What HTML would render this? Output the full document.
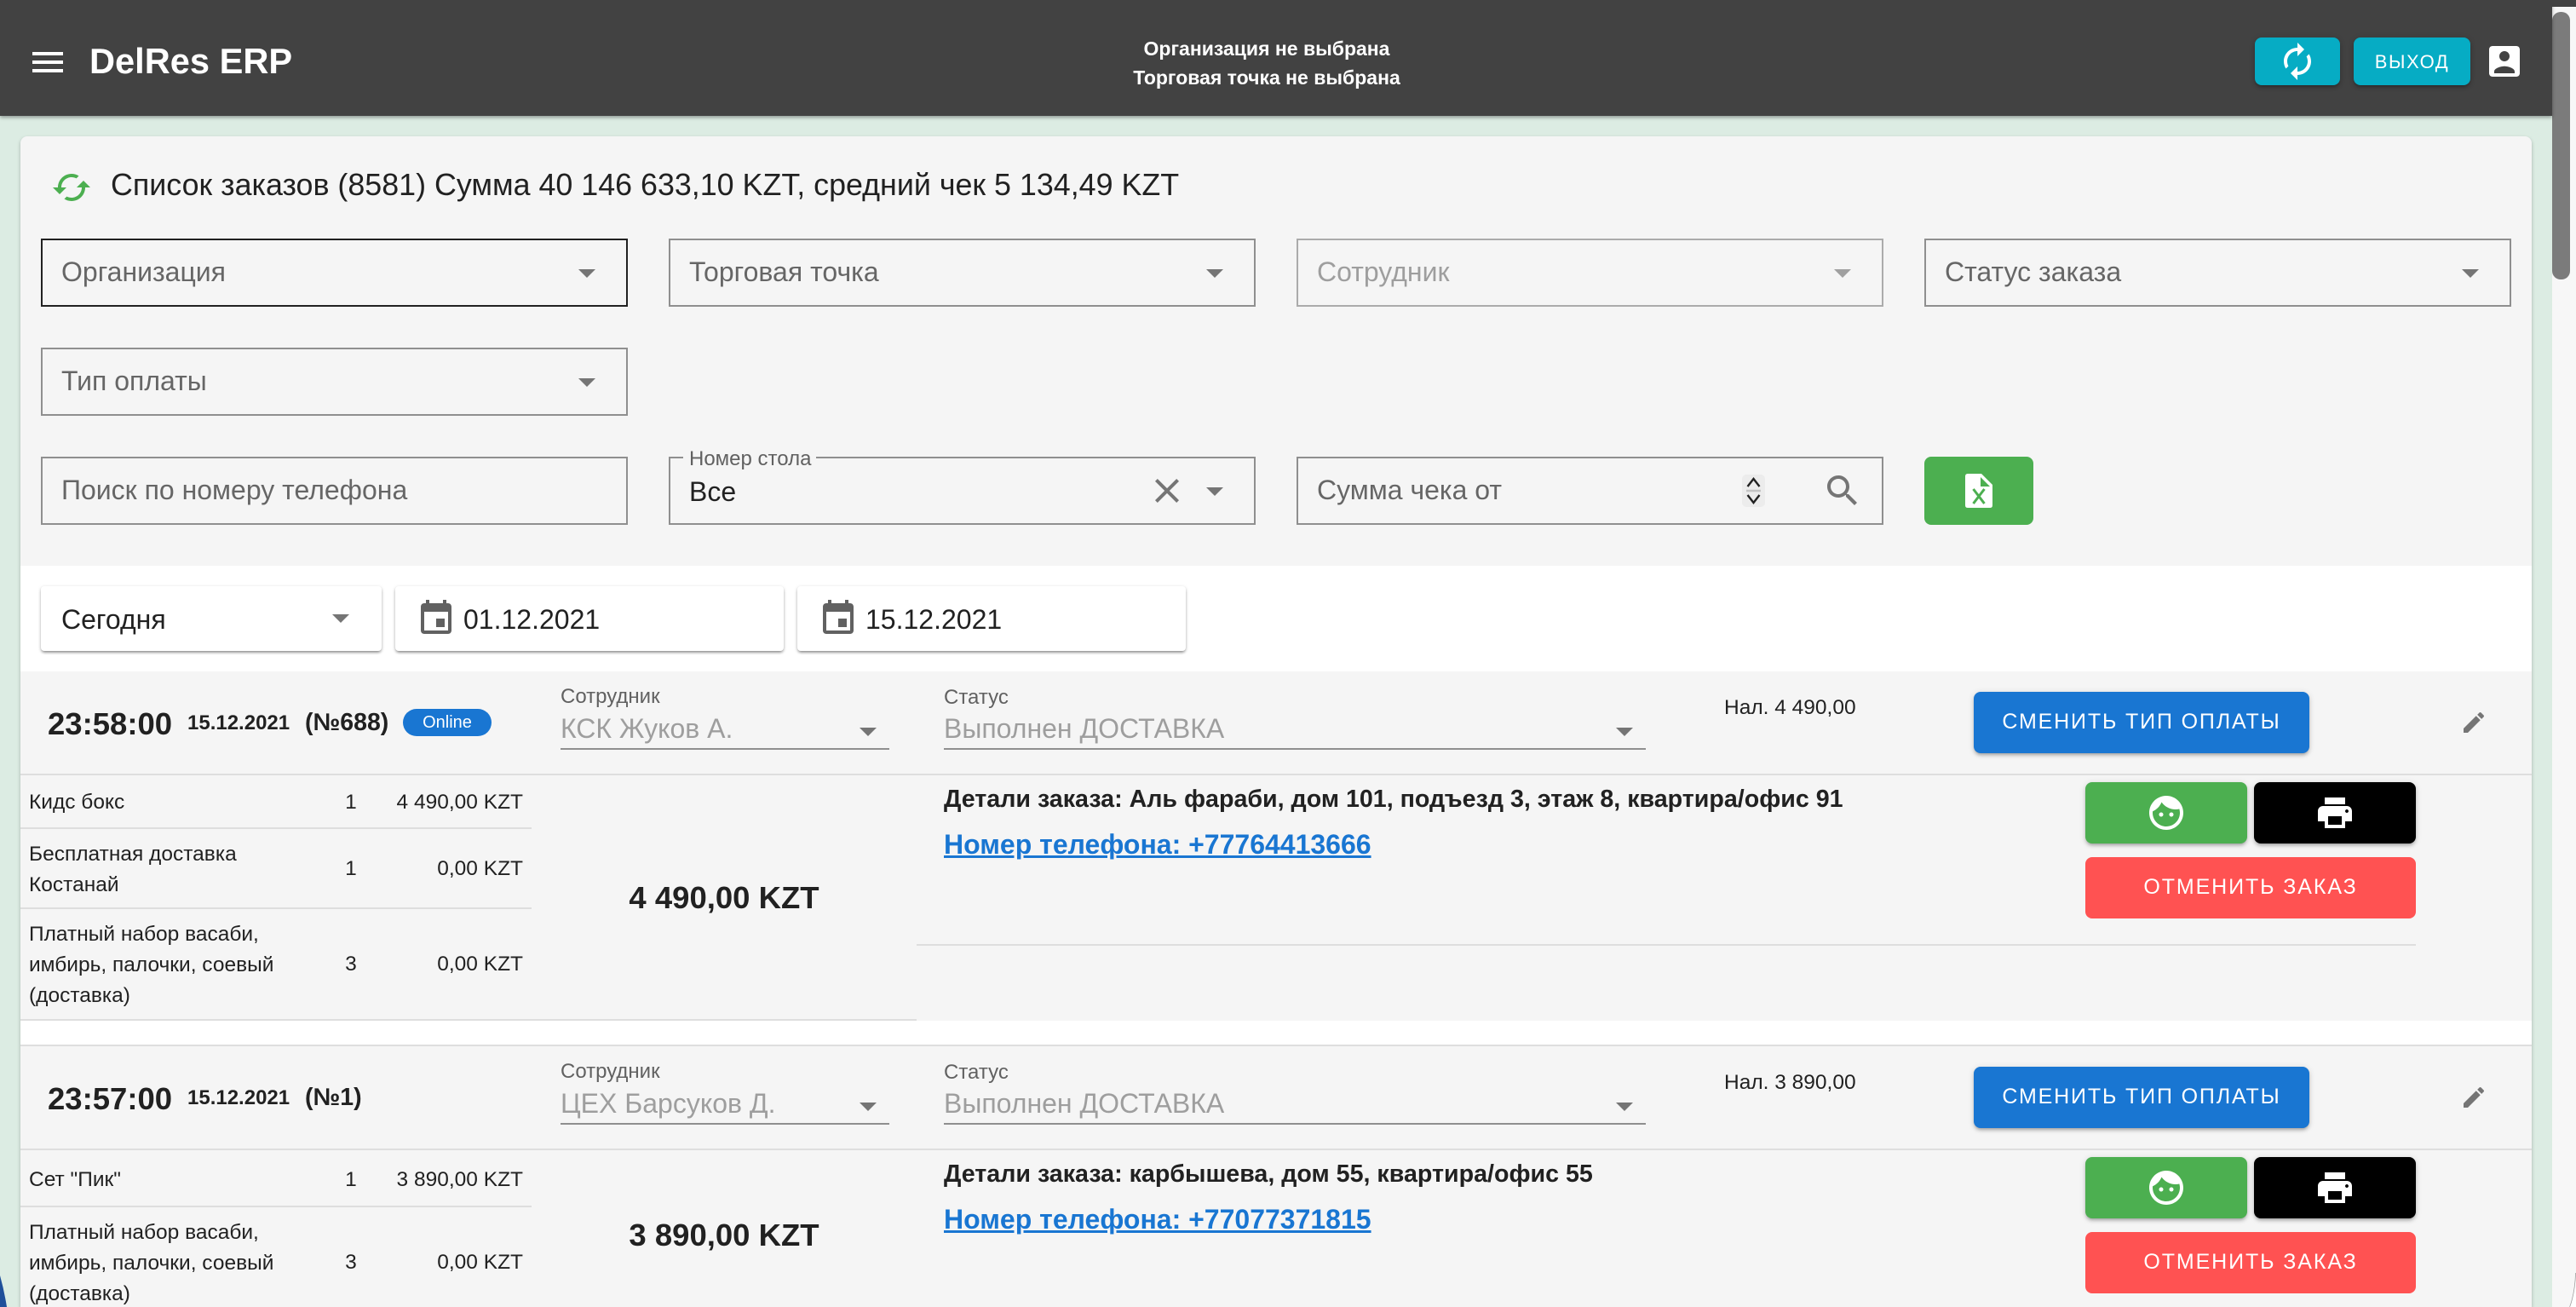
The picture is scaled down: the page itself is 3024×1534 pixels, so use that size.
<!DOCTYPE html>
<html lang="ru"><head><meta charset="utf-8"><title>DelRes ERP</title>
<style>
html,body{margin:0;padding:0;width:3024px;height:1534px;overflow:hidden;background:#dcece3}
body{position:relative;font-family:"Liberation Sans",Arial,sans-serif;color:#212121}
.a{position:absolute;white-space:nowrap}
.t{position:absolute;white-space:nowrap;line-height:40px;height:40px}
.box{position:absolute;box-sizing:border-box;width:689px;height:80px;border:2px solid #8f8f8f}
.ph{color:#666;font-size:32px}
.arr{position:absolute;width:0;height:0;border-left:10px solid transparent;border-right:10px solid transparent;border-top:10px solid #757575}
.ln{position:absolute;height:2px;background:#dedede}
.btn{position:absolute;border-radius:8px;box-shadow:0 3px 3px -2px rgba(0,0,0,.2),0 3px 4px rgba(0,0,0,.14),0 1px 8px rgba(0,0,0,.12);color:#fff;text-align:center}
.date{position:absolute;background:#fff;top:688px;height:76px;border-radius:4px;box-shadow:0 3px 3px -2px rgba(0,0,0,.3),0 2px 3px rgba(0,0,0,.2),0 1px 5px rgba(0,0,0,.12)}
svg{position:absolute;display:block}
.s24{font-size:24.5px}
.b{font-weight:bold}
.lab{font-size:24px;color:#616161}
.val{font-size:32px;color:#9e9e9e}
.ul{position:absolute;height:2px;background:#8f8f8f}
</style></head><body>

<!-- card -->
<div class="a" style="left:24px;top:160px;width:2948px;height:1374px;background:#f5f5f5;border-radius:8px 8px 0 0;box-shadow:0 2px 4px rgba(0,0,0,.25)"></div>
<div class="a" style="left:24px;top:664px;width:2948px;height:124px;background:#fff"></div>
<div class="a" style="left:1076px;top:1198px;width:1896px;height:30px;background:#fff"></div>
<div class="a" style="left:24px;top:1198px;width:1052px;height:30px;background:#fff"></div>

<!-- scrollbar -->
<div class="a" style="left:2996px;top:8px;width:28px;height:1526px;background:#f7f7f7"></div>
<div class="a" style="left:2996px;top:14px;width:21px;height:314px;background:#7b7b7b;border-radius:10px"></div>

<!-- header -->
<div class="a" style="left:0;top:0;width:2996px;height:136px;background:#424242;box-shadow:0 2px 4px rgba(0,0,0,.35)"></div>
<div class="a" style="left:2996px;top:0;width:28px;height:8px;background:#424242"></div>
<svg style="left:32px;top:49px" width="48" height="48" viewBox="0 0 24 24" fill="#fff"><path d="M3 18h18v-2H3v2zm0-5h18v-2H3v2zm0-7v2h18V6H3z"/></svg>
<div class="t b" style="left:105px;top:52px;font-size:41.6px;color:#fff">DelRes ERP</div>
<div class="t b" style="left:1287px;width:400px;top:37px;font-size:23px;color:#fff;text-align:center">Организация не выбрана</div>
<div class="t b" style="left:1287px;width:400px;top:71px;font-size:23px;color:#fff;text-align:center">Торговая точка не выбрана</div>
<div class="btn" style="left:2647px;top:44px;width:100px;height:56px;background:#06acc4"></div>
<svg style="left:2673px;top:48px;transform:scaleX(-1)" width="48" height="48" viewBox="0 0 24 24" fill="#fff"><path d="M12 4V1L8 5l4 4V6c3.31 0 6 2.69 6 6 0 1.01-.25 1.97-.7 2.8l1.46 1.46C19.54 15.03 20 13.57 20 12c0-4.42-3.58-8-8-8zm0 14c-3.31 0-6-2.69-6-6 0-1.01.25-1.97.7-2.8L5.24 7.74C4.46 8.97 4 10.43 4 12c0 4.42 3.58 8 8 8v3l4-4-4-4v3z"/></svg>
<div class="btn" style="left:2763px;top:44px;width:137px;height:56px;line-height:58px;background:#06acc4;font-size:22px;letter-spacing:1.6px">ВЫХОД</div>
<svg style="left:2916px;top:48px" width="48" height="48" viewBox="0 0 24 24" fill="#fff"><path d="M19 3H5c-1.11 0-2 .9-2 2v14c0 1.1.89 2 2 2h14c1.1 0 2-.9 2-2V5c0-1.1-.9-2-2-2zm-7 3c1.65 0 3 1.35 3 3s-1.35 3-3 3-3-1.35-3-3 1.35-3 3-3zm6 13H6v-1c0-2 4-3.1 6-3.1s6 1.1 6 3.1v1z"/></svg>

<!-- title -->
<svg style="left:60px;top:196px" width="48" height="48" viewBox="0 0 24 24" fill="#4caf50"><path d="M19 8l-4 4h3c0 3.31-2.69 6-6 6-1.01 0-1.97-.25-2.8-.7l-1.46 1.46C8.97 19.54 10.43 20 12 20c4.42 0 8-3.58 8-8h3l-4-4zM6 12c0-3.31 2.69-6 6-6 1.01 0 1.97.25 2.8.7l1.46-1.46C15.03 4.46 13.57 4 12 4c-4.42 0-8 3.58-8 8H1l4 4 4-4H6z"/></svg>
<div class="t" style="left:130px;top:197px;font-size:35.84px">Список заказов (8581) Сумма 40 146 633,10 KZT, средний чек 5 134,49 KZT</div>

<!-- filters row 1 -->
<div class="box" style="left:48px;top:280px;border-color:#212121"></div>
<div class="t ph" style="left:72px;top:299px">Организация</div><div class="arr" style="left:679px;top:316px"></div>
<div class="box" style="left:785px;top:280px"></div>
<div class="t ph" style="left:809px;top:299px">Торговая точка</div><div class="arr" style="left:1416px;top:316px"></div>
<div class="box" style="left:1522px;top:280px;border-color:#ababab"></div>
<div class="t ph" style="left:1546px;top:299px;color:#9e9e9e">Сотрудник</div><div class="arr" style="left:2153px;top:316px;border-top-color:#a0a0a0"></div>
<div class="box" style="left:2259px;top:280px"></div>
<div class="t ph" style="left:2283px;top:299px">Статус заказа</div><div class="arr" style="left:2890px;top:316px"></div>

<!-- row 2 -->
<div class="box" style="left:48px;top:408px"></div>
<div class="t ph" style="left:72px;top:427px">Тип оплаты</div><div class="arr" style="left:679px;top:444px"></div>

<!-- row 3 -->
<div class="box" style="left:48px;top:536px"></div>
<div class="t ph" style="left:72px;top:555px">Поиск по номеру телефона</div>
<div class="box" style="left:785px;top:536px"></div>
<div class="a" style="left:802px;top:534px;width:156px;height:6px;background:#f5f5f5"></div>
<div class="t lab" style="left:809px;top:519px">Номер стола</div>
<div class="t" style="left:809px;top:557px;font-size:32px">Все</div>
<svg style="left:1346px;top:552px" width="48" height="48" viewBox="0 0 24 24" fill="#757575"><path d="M19 6.41L17.59 5 12 10.59 6.41 5 5 6.41 10.59 12 5 17.59 6.41 19 12 13.41 17.59 19 19 17.59 13.41 12z"/></svg>
<div class="arr" style="left:1416px;top:572px"></div>
<div class="box" style="left:1522px;top:536px"></div>
<div class="t ph" style="left:1546px;top:555px">Сумма чека от</div>
<div class="a" style="left:2045px;top:557px;width:27px;height:38px;background:#ececec;border-radius:5px"></div>
<svg style="left:2045px;top:557px" width="27" height="38" viewBox="0 0 27 38" fill="none" stroke="#222" stroke-width="2.4"><path d="M6.500 14L13.500 5 20.500 14M6.500 24L13.500 33 20.500 24"/><path d="M5 19H22" stroke="#c4c4c4"/></svg>
<svg style="left:2139px;top:552px" width="48" height="48" viewBox="0 0 24 24" fill="#757575"><path d="M15.500 14h-.79l-.28-.27C15.410 12.590 16 11.110 16 9.500 16 5.910 13.090 3 9.500 3S3 5.910 3 9.500 5.910 16 9.500 16c1.610 0 3.090-.59 4.230-1.570l.27.28v.79l5 4.990L20.490 19l-4.990-5zm-6 0C7.010 14 5 11.990 5 9.500S7.010 5 9.500 5 14 7.010 14 9.500 11.990 14 9.500 14z"/></svg>
<div class="a" style="left:2259px;top:536px;width:128px;height:80px;background:#4caf50;border-radius:8px"></div>
<svg style="left:2307px;top:556px" width="32" height="40" viewBox="0 0 32 40"><path d="M3 0H19L32 13V37Q32 40 29 40H3Q0 40 0 37V3Q0 0 3 0Z" fill="#fff"/><path d="M18 4L29 15H18Z" fill="#4caf50"/><path d="M9.500 18L22.500 35M22.500 18L9.500 35" stroke="#4caf50" stroke-width="3" fill="none"/></svg>

<!-- date row -->
<div class="date" style="left:48px;width:400px"></div>
<div class="t" style="left:72px;top:707px;font-size:32px">Сегодня</div>
<div class="arr" style="left:390px;top:721px"></div>
<div class="date" style="left:464px;width:456px"></div>
<svg style="left:488px;top:702px" width="48" height="48" viewBox="0 0 24 24" fill="#616161"><path d="M17 12h-5v5h5v-5zM16 1v2H8V1H6v2H5c-1.110 0-1.990.9-1.990 2L3 19c0 1.100.89 2 2 2h14c1.100 0 2-.9 2-2V5c0-1.100-.9-2-2-2h-1V1h-2zm3 18H5V8h14v11z"/></svg>
<div class="t" style="left:544px;top:707px;font-size:32px">01.12.2021</div>
<div class="date" style="left:936px;width:456px"></div>
<svg style="left:960px;top:702px" width="48" height="48" viewBox="0 0 24 24" fill="#616161"><path d="M17 12h-5v5h5v-5zM16 1v2H8V1H6v2H5c-1.110 0-1.990.9-1.990 2L3 19c0 1.100.89 2 2 2h14c1.100 0 2-.9 2-2V5c0-1.100-.9-2-2-2h-1V1h-2zm3 18H5V8h14v11z"/></svg>
<div class="t" style="left:1016px;top:707px;font-size:32px">15.12.2021</div>

<!-- ORDER 1 -->
<div class="t b" style="left:56px;top:830px;font-size:36.5px">23:58:00</div>
<div class="t b" style="left:220px;top:829px;font-size:24px">15.12.2021</div>
<div class="t b" style="left:358px;top:828px;font-size:28.5px">(№688)</div>
<div class="a" style="left:473px;top:832px;width:104px;height:32px;line-height:32px;background:#1976d2;border-radius:16px;color:#fff;font-size:20px;text-align:center">Online</div>
<div class="t lab" style="left:658px;top:798px">Сотрудник</div>
<div class="t val" style="left:658px;top:835px">КСК Жуков А.</div>
<div class="arr" style="left:1009px;top:854px"></div>
<div class="ul" style="left:658px;top:878px;width:386px"></div>
<div class="t lab" style="left:1108px;top:799px">Статус</div>
<div class="t val" style="left:1108px;top:835px">Выполнен ДОСТАВКА</div>
<div class="arr" style="left:1897px;top:854px"></div>
<div class="ul" style="left:1108px;top:878px;width:824px"></div>
<div class="t s24" style="left:2024px;top:811px">Нал. 4 490,00</div>
<div class="btn" style="left:2317px;top:812px;width:394px;height:72px;line-height:71px;background:#1976d2;font-size:25px;letter-spacing:1.85px">СМЕНИТЬ ТИП ОПЛАТЫ</div>
<svg style="left:2888px;top:832px" width="32" height="32" viewBox="0 0 24 24" fill="#757575"><path d="M3 17.250V21h3.750L17.810 9.940l-3.750-3.750L3 17.250zM20.710 7.040c.39-.39.39-1.020 0-1.410l-2.340-2.340c-.39-.39-1.020-.39-1.410 0l-1.830 1.830 3.750 3.750 1.830-1.830z"/></svg>
<div class="ln" style="left:24px;top:908px;width:2948px"></div>

<div class="t s24" style="left:34px;top:922px">Кидс бокс</div><div class="t s24" style="left:402px;width:20px;top:922px;text-align:center">1</div><div class="t s24" style="left:314px;width:300px;top:922px;text-align:right">4 490,00 KZT</div>
<div class="ln" style="left:24px;top:971px;width:600px"></div>
<div class="t s24" style="left:34px;top:983px">Бесплатная доставка</div><div class="t s24" style="left:34px;top:1019px">Костанай</div>
<div class="t s24" style="left:402px;width:20px;top:1000px;text-align:center">1</div><div class="t s24" style="left:314px;width:300px;top:1000px;text-align:right">0,00 KZT</div>
<div class="ln" style="left:24px;top:1065px;width:600px"></div>
<div class="t s24" style="left:34px;top:1077px">Платный набор васаби,</div><div class="t s24" style="left:34px;top:1113px">имбирь, палочки, соевый</div><div class="t s24" style="left:34px;top:1149px">(доставка)</div>
<div class="t s24" style="left:402px;width:20px;top:1112px;text-align:center">3</div><div class="t s24" style="left:314px;width:300px;top:1112px;text-align:right">0,00 KZT</div>
<div class="ln" style="left:24px;top:1196px;width:1052px"></div>
<div class="t b" style="left:650px;width:400px;top:1034px;font-size:36.5px;text-align:center">4 490,00 KZT</div>
<div class="t b" style="left:1108px;top:918px;font-size:28.64px">Детали заказа: Аль фараби, дом 101, подъезд 3, этаж 8, квартира/офис 91</div>
<div class="t b" style="left:1108px;top:971px;font-size:32px;color:#1976d2;text-decoration:underline">Номер телефона: +77764413666</div>
<div class="ln" style="left:1076px;top:1108px;width:1760px"></div>
<div class="btn" style="left:2448px;top:918px;width:190px;height:72px;background:#4caf50"></div>
<svg style="left:2519px;top:930px" width="48" height="48" viewBox="0 0 24 24" fill="#fff"><path d="M9 11.750c-.69 0-1.250.56-1.250 1.250s.56 1.250 1.250 1.250 1.250-.56 1.250-1.250-.56-1.250-1.250-1.250zm6 0c-.69 0-1.250.56-1.250 1.250s.56 1.250 1.250 1.250 1.250-.56 1.250-1.250-.56-1.250-1.250-1.250zM12 2C6.480 2 2 6.480 2 12s4.480 10 10 10 10-4.480 10-10S17.520 2 12 2zm0 18c-4.410 0-8-3.590-8-8 0-.29.02-.58.05-.86 2.360-1.050 4.230-2.980 5.210-5.370C11.070 8.330 14.050 10 17.420 10c.78 0 1.530-.09 2.250-.26.21.71.33 1.470.33 2.260 0 4.410-3.590 8-8 8z"/></svg>
<div class="btn" style="left:2646px;top:918px;width:190px;height:72px;background:#000"></div>
<svg style="left:2717px;top:930px" width="48" height="48" viewBox="0 0 24 24" fill="#fff"><path d="M19 8H5c-1.660 0-3 1.340-3 3v6h4v4h12v-4h4v-6c0-1.660-1.340-3-3-3zm-3 11H8v-5h8v5zm3-7c-.55 0-1-.45-1-1s.45-1 1-1 1 .45 1 1-.45 1-1 1zm-1-9H6v4h12V3z"/></svg>
<div class="a" style="left:2448px;top:1006px;width:388px;height:72px;line-height:70px;background:#ff5252;border-radius:8px;color:#fff;text-align:center;font-size:25px;letter-spacing:1.9px">ОТМЕНИТЬ ЗАКАЗ</div>

<!-- ORDER 2 -->
<div class="ln" style="left:24px;top:1226px;width:2948px"></div>
<div class="t b" style="left:56px;top:1270px;font-size:36.5px">23:57:00</div>
<div class="t b" style="left:220px;top:1269px;font-size:24px">15.12.2021</div>
<div class="t b" style="left:358px;top:1268px;font-size:28.5px">(№1)</div>
<div class="t lab" style="left:658px;top:1238px">Сотрудник</div>
<div class="t val" style="left:658px;top:1275px">ЦЕХ Барсуков Д.</div>
<div class="arr" style="left:1009px;top:1294px"></div>
<div class="ul" style="left:658px;top:1318px;width:386px"></div>
<div class="t lab" style="left:1108px;top:1239px">Статус</div>
<div class="t val" style="left:1108px;top:1275px">Выполнен ДОСТАВКА</div>
<div class="arr" style="left:1897px;top:1294px"></div>
<div class="ul" style="left:1108px;top:1318px;width:824px"></div>
<div class="t s24" style="left:2024px;top:1251px">Нал. 3 890,00</div>
<div class="btn" style="left:2317px;top:1252px;width:394px;height:72px;line-height:71px;background:#1976d2;font-size:25px;letter-spacing:1.85px">СМЕНИТЬ ТИП ОПЛАТЫ</div>
<svg style="left:2888px;top:1272px" width="32" height="32" viewBox="0 0 24 24" fill="#757575"><path d="M3 17.250V21h3.750L17.810 9.940l-3.750-3.750L3 17.250zM20.710 7.040c.39-.39.39-1.020 0-1.410l-2.340-2.340c-.39-.39-1.020-.39-1.410 0l-1.830 1.830 3.750 3.750 1.830-1.830z"/></svg>
<div class="ln" style="left:24px;top:1348px;width:2948px"></div>

<div class="t s24" style="left:34px;top:1365px">Сет "Пик"</div><div class="t s24" style="left:402px;width:20px;top:1365px;text-align:center">1</div><div class="t s24" style="left:314px;width:300px;top:1365px;text-align:right">3 890,00 KZT</div>
<div class="ln" style="left:24px;top:1415px;width:600px"></div>
<div class="t s24" style="left:34px;top:1427px">Платный набор васаби,</div><div class="t s24" style="left:34px;top:1463px">имбирь, палочки, соевый</div><div class="t s24" style="left:34px;top:1499px">(доставка)</div>
<div class="t s24" style="left:402px;width:20px;top:1462px;text-align:center">3</div><div class="t s24" style="left:314px;width:300px;top:1462px;text-align:right">0,00 KZT</div>
<div class="t b" style="left:650px;width:400px;top:1430px;font-size:36.5px;text-align:center">3 890,00 KZT</div>
<div class="t b" style="left:1108px;top:1358px;font-size:28.64px">Детали заказа: карбышева, дом 55, квартира/офис 55</div>
<div class="t b" style="left:1108px;top:1411px;font-size:32px;color:#1976d2;text-decoration:underline">Номер телефона: +77077371815</div>
<div class="btn" style="left:2448px;top:1358px;width:190px;height:72px;background:#4caf50"></div>
<svg style="left:2519px;top:1370px" width="48" height="48" viewBox="0 0 24 24" fill="#fff"><path d="M9 11.750c-.69 0-1.250.56-1.250 1.250s.56 1.250 1.250 1.250 1.250-.56 1.250-1.250-.56-1.250-1.250-1.250zm6 0c-.69 0-1.250.56-1.250 1.250s.56 1.250 1.250 1.250 1.250-.56 1.250-1.250-.56-1.250-1.250-1.250zM12 2C6.480 2 2 6.480 2 12s4.480 10 10 10 10-4.480 10-10S17.520 2 12 2zm0 18c-4.410 0-8-3.590-8-8 0-.29.02-.58.05-.86 2.360-1.050 4.230-2.980 5.210-5.370C11.070 8.330 14.050 10 17.420 10c.78 0 1.530-.09 2.250-.26.21.71.33 1.470.33 2.260 0 4.410-3.590 8-8 8z"/></svg>
<div class="btn" style="left:2646px;top:1358px;width:190px;height:72px;background:#000"></div>
<svg style="left:2717px;top:1370px" width="48" height="48" viewBox="0 0 24 24" fill="#fff"><path d="M19 8H5c-1.660 0-3 1.340-3 3v6h4v4h12v-4h4v-6c0-1.660-1.340-3-3-3zm-3 11H8v-5h8v5zm3-7c-.55 0-1-.45-1-1s.45-1 1-1 1 .45 1 1-.45 1-1 1zm-1-9H6v4h12V3z"/></svg>
<div class="a" style="left:2448px;top:1446px;width:388px;height:72px;line-height:70px;background:#ff5252;border-radius:8px;color:#fff;text-align:center;font-size:25px;letter-spacing:1.9px">ОТМЕНИТЬ ЗАКАЗ</div>

<!-- window corners -->
<svg style="left:0;top:1497px" width="12" height="37" viewBox="0 0 12 37"><path d="M0 0Q5 18 8 37H0Z" fill="#1f4f9a"/></svg>
<svg style="left:3014px;top:1490px" width="10" height="44" viewBox="0 0 10 44"><path d="M10 4Q9 28 3 44" fill="none" stroke="#9a9a9a" stroke-width="1.500"/><path d="M10 4Q9 28 3 44H10Z" fill="#fff"/></svg>
</body></html>
